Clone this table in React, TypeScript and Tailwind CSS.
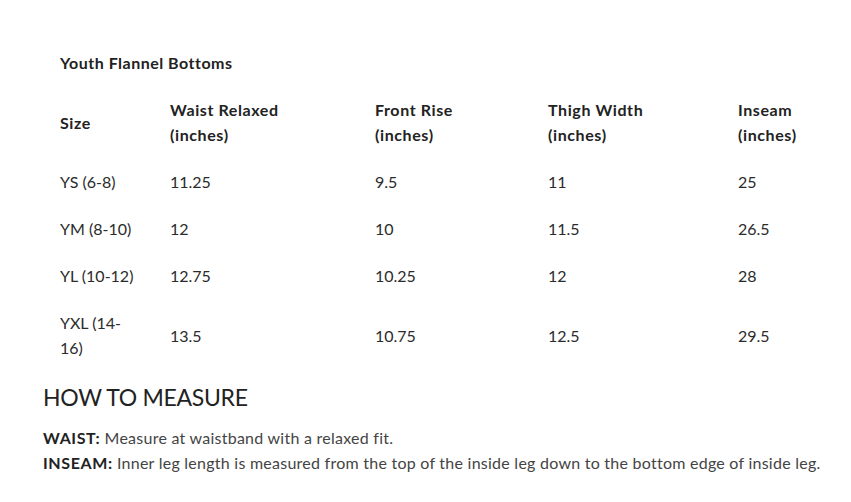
import React from "react";

const rows: [React.ReactNode, string, string, string, string][] = [
  ["YS (6-8)", "11.25", "9.5", "11", "25"],
  ["YM (8-10)", "12", "10", "11.5", "26.5"],
  ["YL (10-12)", "12.75", "10.25", "12", "28"],
  [<>YXL (14-<br />16)</>, "13.5", "10.75", "12.5", "29.5"],
];

export default function App() {
  return (
    <div
      className="w-[851px] h-[502px] bg-white text-[#2b2b2b] overflow-hidden"
      style={{ fontFamily: "Lato, 'Liberation Sans', sans-serif" }}
    >
      <div className="pt-[50px] pl-[60px]">
        <div className="text-[16px] font-bold leading-[25px] tracking-[0.5px] text-[#222]">Youth Flannel Bottoms</div>
        <table className="mt-[11px] border-collapse text-[16px] leading-[25px]">
          <colgroup>
            <col className="w-[110px]" />
            <col className="w-[205px]" />
            <col className="w-[173px]" />
            <col className="w-[190px]" />
            <col className="w-[100px]" />
          </colgroup>
          <thead>
            <tr className="text-[#222] tracking-[0.6px]">
              <th className="text-left py-[11px] align-middle font-bold">Size</th>
              <th className="text-left py-[11px] font-bold">Waist Relaxed<br />(inches)</th>
              <th className="text-left py-[11px] font-bold">Front Rise<br />(inches)</th>
              <th className="text-left py-[11px] font-bold">Thigh Width<br />(inches)</th>
              <th className="text-left py-[11px] font-bold">Inseam<br />(inches)</th>
            </tr>
          </thead>
          <tbody>
            {rows.map((r, i) => (
              <tr key={i}>
                {r.map((c, j) => (
                  <td key={j} className="py-[11px] align-middle">{c}</td>
                ))}
              </tr>
            ))}
          </tbody>
        </table>
      </div>
      <div className="pl-[43px]">
        <h2 className="text-[23px] leading-[32px] mt-[10px] tracking-[-0.3px] text-[#222]">HOW TO MEASURE</h2>
        <div className="mt-[12px] text-[16px] leading-[25px] tracking-[0.25px] text-[#444]">
          <p><b className="text-[#222] tracking-[0.6px]">WAIST:</b> Measure at waistband with a relaxed fit.</p>
          <p><b className="text-[#222] tracking-[0.6px]">INSEAM:</b> Inner leg length is measured from the top of the inside leg down to the bottom edge of inside leg.</p>
        </div>
      </div>
    </div>
  );
}
